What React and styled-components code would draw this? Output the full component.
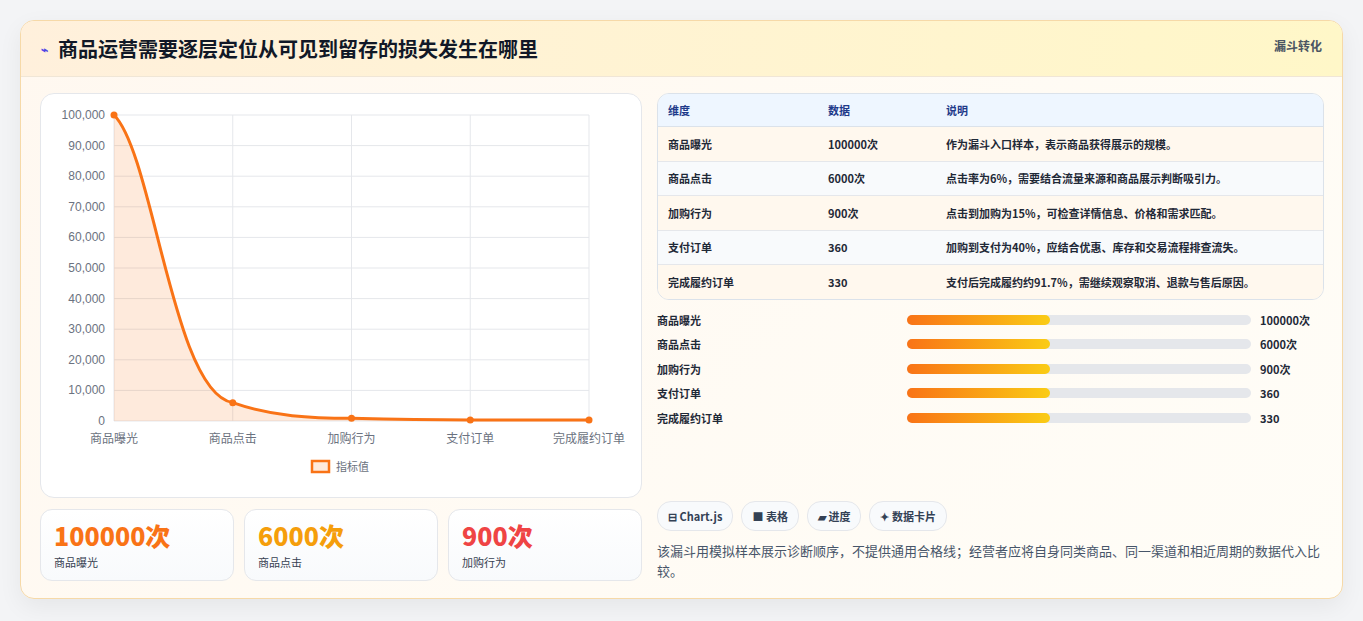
import React from 'react'
import styled, { createGlobalStyle } from 'styled-components'

const Global = createGlobalStyle`
  body { margin: 0; background: #f3f4f6; font-family: "Noto Sans CJK SC", "Noto Sans", sans-serif; }
`

const rows = [
  ['商品曝光', '100000次', '作为漏斗入口样本，表示商品获得展示的规模。'],
  ['商品点击', '6000次', '点击率为6%，需要结合流量来源和商品展示判断吸引力。'],
  ['加购行为', '900次', '点击到加购为15%，可检查详情信息、价格和需求匹配。'],
  ['支付订单', '360', '加购到支付为40%，应结合优惠、库存和交易流程排查流失。'],
  ['完成履约订单', '330', '支付后完成履约约91.7%，需继续观察取消、退款与售后原因。'],
]
const values = [100000, 6000, 900, 360, 330]

const Page = styled.div`
  padding: 20px 20px 22px 20px;
`
const Card = styled.div`
  border: 1px solid #f6d9a8;
  border-radius: 14px;
  background: linear-gradient(135deg, #fff8f0, #fffdf7);
  box-shadow: 0 8px 24px rgba(0,0,0,0.06);
  overflow: hidden;
`
const Header = styled.div`
  height: 55px;
  display: flex;
  align-items: center;
  justify-content: space-between;
  padding: 0 20px;
  background: linear-gradient(90deg, #fff0dc, #fff7c8);
  border-bottom: 1px solid #f0e6d6;
  position: relative;
`
const Title = styled.h1`
  margin: 0;
  font-size: 20px;
  font-weight: 700;
  color: #111827;
  display: flex;
  align-items: center;
  gap: 10px;
`
const Tag = styled.span`
  position: absolute;
  right: 20px;
  top: 16px;
  font-size: 12px;
  font-weight: 700;
  color: #4b5563;
`
const Body = styled.div`
  display: grid;
  grid-template-columns: 602px 1fr;
  gap: 15px;
  padding: 16px 18px 17px 19px;
`
const Col = styled.div`
  display: flex;
  flex-direction: column;
`
const ChartBox = styled.div`
  height: 403px;
  border: 1px solid #e5e7eb;
  border-radius: 14px;
  background: #fff;
`
const Stats = styled.div`
  display: grid;
  grid-template-columns: repeat(3, 1fr);
  gap: 10px;
  margin-top: 11px;
`
const Stat = styled.div`
  height: 72px;
  border: 1px solid #e5e7eb;
  border-radius: 12px;
  background: linear-gradient(180deg, #fff, #f8fafc);
  padding: 10px 13px;
  box-sizing: border-box;
`
const StatNum = styled.div`
  font-size: 25px;
  font-weight: 800;
  line-height: 30px;
  color: ${p => p.c};
`
const StatLabel = styled.div`
  font-size: 11px;
  color: #374151;
  margin-top: 4px;
`
const Table = styled.table`
  width: 100%;
  border-collapse: separate;
  border-spacing: 0;
  border: 1px solid #dbe2ea;
  border-radius: 12px;
  overflow: hidden;
  font-size: 11px;
  font-weight: 600;
  color: #1f2937;
  th { background: #eef6ff; color: #1e3a8a; text-align: left; height: 32px; padding: 0 10px; border-bottom: 1px solid #dbe2ea; }
  td { height: 33.5px; padding: 0 10px; border-bottom: 1px solid #e5e7eb; }
  tr:nth-child(odd) td { background: #fff8ee; }
  tr:nth-child(even) td { background: #f8fafc; }
  tr:last-child td { border-bottom: none; }
`
const Bars = styled.div`
  display: flex;
  flex-direction: column;
  gap: 6.5px;
  margin-top: 11px;
`
const BarRow = styled.div`
  display: grid;
  grid-template-columns: 241px 344px 1fr;
  align-items: center;
  gap: 9px;
  height: 18px;
  font-size: 11px;
  font-weight: 600;
  color: #1f2937;
`
const Track = styled.div`
  height: 10px;
  background: #e5e7eb;
  border-radius: 5px;
`
const Fill = styled.div`
  height: 100%;
  width: 41.5%;
  border-radius: 5px;
  background: linear-gradient(90deg, #f97316, #facc15);
`
const Pills = styled.div`
  display: flex;
  gap: 8px;
  margin-top: auto;
`
const Pill = styled.span`
  height: 28px;
  padding: 0 10px;
  display: flex;
  align-items: center;
  gap: 3px;
  border: 1px solid #e5e7eb;
  border-radius: 14px;
  background: #f8fafc;
  font-size: 11px;
  font-weight: 700;
  color: #334155;
`
const Note = styled.p`
  margin: 10px 0 0;
  font-size: 13px;
  line-height: 20px;
  color: #475569;
`

const Chart = () => {
  const x0 = 73, x1 = 548, y0 = 21, y1 = 327
  const xs = values.map((_, i) => x0 + (i * (x1 - x0)) / 4)
  const ys = values.map(v => y1 - (v / 100000) * (y1 - y0))
  const path = `M${xs[0]},${ys[0]} C${xs[0] + 40},${ys[0] + 40} ${xs[1] - 60},${ys[1] - 10} ${xs[1]},${ys[1]} C${xs[1] + 40},${ys[1] + 14} ${xs[2] - 40},${ys[2]} ${xs[2]},${ys[2]} C${xs[2] + 40},${ys[2] + 1} ${xs[3] - 40},${ys[3]} ${xs[3]},${ys[3]} L${xs[4]},${ys[4]}`
  const labels = ['商品曝光', '商品点击', '加购行为', '支付订单', '完成履约订单']
  return (
    <svg width="600" height="400" style={{ display: 'block' }}>
      {Array.from({ length: 11 }, (_, i) => {
        const y = y0 + (i * (y1 - y0)) / 10
        return (
          <g key={i}>
            <line x1={x0} x2={x1} y1={y} y2={y} stroke="#e5e7eb" />
            <text x={x0 - 9} y={y + 4} textAnchor="end" fontSize="12" fill="#6b7280" fontFamily="Liberation Sans">
              {(100000 - i * 10000).toLocaleString('en-US')}
            </text>
          </g>
        )
      })}
      {xs.map((x, i) => (
        <g key={i}>
          <line x1={x} x2={x} y1={y0} y2={y1} stroke="#e5e7eb" />
          <text x={x} y={y1 + 22} textAnchor="middle" fontSize="12" fill="#6b7280">{labels[i]}</text>
        </g>
      ))}
      <path d={`${path} L${xs[4]},${y1} L${xs[0]},${y1} Z`} fill="rgba(249,115,22,0.15)" />
      <path d={path} fill="none" stroke="#f97316" strokeWidth="3" />
      {xs.map((x, i) => <circle key={i} cx={x} cy={ys[i]} r="3.5" fill="#f97316" />)}
      <rect x="271" y="367" width="17" height="11" fill="rgba(249,115,22,0.15)" stroke="#f97316" strokeWidth="2.5" />
      <text x="295" y="377" fontSize="11" fill="#6b7280">指标值</text>
    </svg>
  )
}

export default function App() {
  return (
    <Page>
      <Global />
      <Card>
        <Header>
          <Title><span style={{ color: '#4f46e5', fontSize: 12 }}>⌁</span>商品运营需要逐层定位从可见到留存的损失发生在哪里</Title>
          <Tag>漏斗转化</Tag>
        </Header>
        <Body>
          <Col>
            <ChartBox><Chart /></ChartBox>
            <Stats>
              <Stat><StatNum c="#f97316">100000次</StatNum><StatLabel>商品曝光</StatLabel></Stat>
              <Stat><StatNum c="#f59e0b">6000次</StatNum><StatLabel>商品点击</StatLabel></Stat>
              <Stat><StatNum c="#ef4444">900次</StatNum><StatLabel>加购行为</StatLabel></Stat>
            </Stats>
          </Col>
          <Col>
            <Table>
              <thead><tr><th style={{ width: 140 }}>维度</th><th style={{ width: 98 }}>数据</th><th>说明</th></tr></thead>
              <tbody>
                {rows.map(r => <tr key={r[0]}>{r.map(c => <td key={c}>{c}</td>)}</tr>)}
              </tbody>
            </Table>
            <Bars>
              {rows.map(r => (
                <BarRow key={r[0]}><span>{r[0]}</span><Track><Fill /></Track><span>{r[1]}</span></BarRow>
              ))}
            </Bars>
            <Pills>
              <Pill>⊟ Chart.js</Pill>
              <Pill>■ 表格</Pill>
              <Pill>▰ 进度</Pill>
              <Pill>✦ 数据卡片</Pill>
            </Pills>
            <Note>该漏斗用模拟样本展示诊断顺序，不提供通用合格线；经营者应将自身同类商品、同一渠道和相近周期的数据代入比较。</Note>
          </Col>
        </Body>
      </Card>
    </Page>
  )
}
